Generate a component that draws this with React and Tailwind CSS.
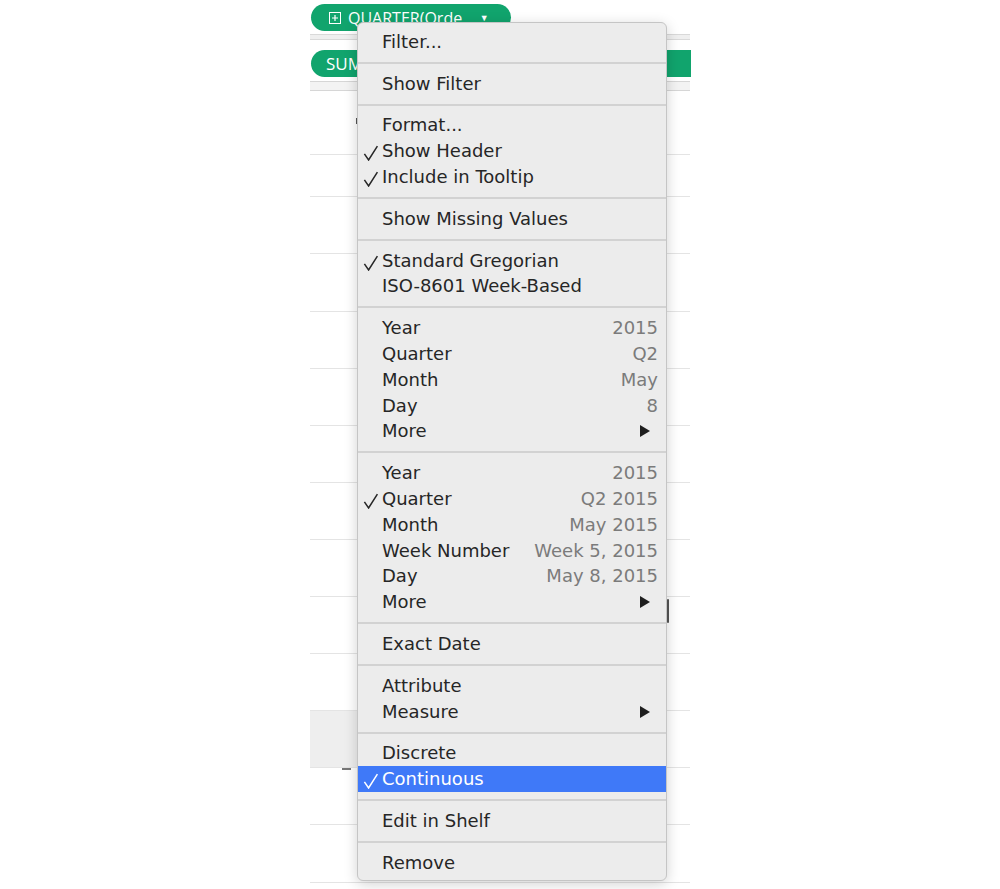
import React from 'react';

const groups = [
  [{ label: 'Filter...' }],
  [{ label: 'Show Filter' }],
  [
    { label: 'Format...' },
    { label: 'Show Header', checked: true },
    { label: 'Include in Tooltip', checked: true },
  ],
  [{ label: 'Show Missing Values' }],
  [
    { label: 'Standard Gregorian', checked: true },
    { label: 'ISO-8601 Week-Based' },
  ],
  [
    { label: 'Year', value: '2015' },
    { label: 'Quarter', value: 'Q2' },
    { label: 'Month', value: 'May' },
    { label: 'Day', value: '8' },
    { label: 'More', submenu: true },
  ],
  [
    { label: 'Year', value: '2015' },
    { label: 'Quarter', value: 'Q2 2015', checked: true },
    { label: 'Month', value: 'May 2015' },
    { label: 'Week Number', value: 'Week 5, 2015' },
    { label: 'Day', value: 'May 8, 2015' },
    { label: 'More', submenu: true },
  ],
  [{ label: 'Exact Date' }],
  [{ label: 'Attribute' }, { label: 'Measure', submenu: true }],
  [{ label: 'Discrete' }, { label: 'Continuous', checked: true, active: true }],
  [{ label: 'Edit in Shelf' }],
  [{ label: 'Remove' }],
];

// row boundaries of the view behind the menu
const rows = [
  { h: 'h-[64px]' },
  { h: 'h-[42px]' },
  { h: 'h-[57px]' },
  { h: 'h-[58px]' },
  { h: 'h-[57px]' },
  { h: 'h-[57px]' },
  { h: 'h-[57px]' },
  { h: 'h-[57px]' },
  { h: 'h-[57px]' },
  { h: 'h-[57px]' },
  { h: 'h-[57px]' },
  { h: 'h-[57px]', shaded: true },
  { h: 'h-[57px]' },
  { h: 'h-[58px]' },
];

function Arrow({ white }) {
  return (
    <svg width="10" height="12" viewBox="0 0 10 12" className="shrink-0">
      <path d="M0 0 L10 6 L0 12 Z" fill={white ? '#fff' : '#1e1e1e'} />
    </svg>
  );
}

function Check({ white }) {
  return (
    <svg width="16" height="16" viewBox="0 0 16 16" className="mt-[4px]">
      <path
        d="M1.4 8.8 L5.6 15 L14.4 1.2"
        fill="none"
        stroke={white ? '#fff' : '#262626'}
        strokeWidth="1.5"
      />
    </svg>
  );
}

function MenuItem({ item }) {
  return (
    <div
      className={`h-[25.8px] flex items-center pl-[5px] pr-[8px] ${
        item.active ? 'bg-[#3f79f8] text-white' : 'text-[#262626]'
      }`}
    >
      <span className="w-[19px] shrink-0 flex items-center">
        {item.checked && <Check white={item.active} />}
      </span>
      <span className="flex-1 whitespace-nowrap">{item.label}</span>
      {item.value && (
        <span className={item.active ? 'text-white' : 'text-[#7b7b7b]'}>{item.value}</span>
      )}
      {item.submenu && (
        <span className="pr-[8px] flex items-center">
          <Arrow white={item.active} />
        </span>
      )}
    </div>
  );
}

export default function App() {
  return (
    <div className="min-h-screen bg-white relative overflow-hidden">
      <div className="ml-[310px] w-[380px] h-[889px] relative font-['Open_Sans',sans-serif]">
        {/* columns shelf */}
        <div className="h-[34px] pt-[4px] pl-[1px]">
          <div className="w-[200px] h-[27px] rounded-full bg-[#11a46d] flex items-center pl-[18px] text-white text-[16px] whitespace-nowrap">
            <svg width="12" height="12" viewBox="0 0 12 12" className="shrink-0 mr-[7px]">
              <rect x="0.5" y="0.5" width="11" height="11" fill="none" stroke="#fff" strokeWidth="1" />
              <path d="M6 3 V9 M3 6 H9" stroke="#fff" strokeWidth="1.2" />
            </svg>
            <span>QUARTER(Orde</span>
            <div className="ml-[6px] w-[32px] h-[13px] border-b border-dotted border-white/80 flex items-center justify-center">
              <span className="text-[9px] leading-none">▼</span>
            </div>
          </div>
        </div>
        <div className="h-[6px] bg-[#efefef] border-t border-b border-[#d9d9d9]" />
        {/* rows shelf */}
        <div className="h-[41px] pt-[10px] pl-[1px]">
          <div className="w-[380px] h-[27px] rounded-l-full bg-[#11a46d] flex items-center pl-[15px] text-white text-[17px]">
            SUM
          </div>
        </div>
        <div className="h-[10px] bg-[#f3f3f3] border-t border-b border-[#d6d6d6]" />
        {/* view */}
        <div className="flex flex-col">
          {rows.map((r, i) => (
            <div key={i} className={`${r.h} border-b border-[#e4e4e4] flex`}>
              {r.shaded && <div className="w-[47px] bg-[#eeeeee]" />}
            </div>
          ))}
        </div>

        {/* stray marks of the view showing past the menu */}
        <div className="absolute left-[46px] top-[118px] w-[2px] h-[6px] bg-[#555]" />
        <div className="absolute left-[32px] top-[768px] w-[9px] h-[2px] bg-[#777]" />
        <div className="absolute left-[357px] top-[599px] w-[2px] h-[24px] bg-[#555] rounded" />

        {/* context menu */}
        <div className="absolute left-[47px] top-[22px] w-[310px] rounded-[6px] border border-[#c5c5c5] bg-[#ececec] pt-[6px] pb-[4px] shadow-[0_3px_14px_rgba(0,0,0,0.18)] font-['DejaVu_Sans',sans-serif] text-[18px] leading-none">
          {groups.map((g, gi) => (
            <div key={gi}>
              {gi > 0 && (
                <div className="h-[16px] flex items-center">
                  <div className="w-full h-[2px] bg-[#d2d2d2]" />
                </div>
              )}
              {g.map((item, ii) => (
                <MenuItem key={ii} item={item} />
              ))}
            </div>
          ))}
        </div>
      </div>
    </div>
  );
}
